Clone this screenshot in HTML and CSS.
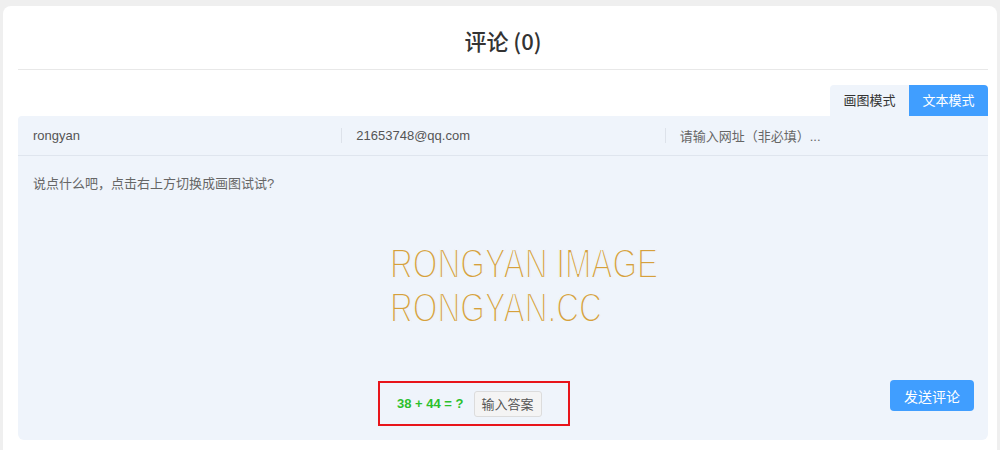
FILE: index.html
```html
<!DOCTYPE html>
<html lang="zh-CN">
  <head>
    <meta charset="UTF-8" />
    <meta name="viewport" content="width=device-width, initial-scale=1.0" />
    <title>评论</title>
    <link rel="stylesheet" href="styles.css">
  </head>
  <body>
    <div class="card">
      <header class="title">
        <h3>评论 (0)</h3>
      </header>

      <div class="tabs">
        <span class="tab">画图模式</span>
        <span class="tab active">文本模式</span>
      </div>

      <form class="comment-form">
        <div class="fields">
          <div class="field">rongyan</div>
          <div class="field">21653748@qq.com</div>
          <div class="field placeholder">请输入网址（非必填）...</div>
        </div>

        <div class="textarea">
          <p class="placeholder">说点什么吧，点击右上方切换成画图试试?</p>
          <div class="watermark">
            <span>RONGYAN IMAGE</span>
            <span>RONGYAN.CC</span>
          </div>
        </div>

        <div class="footer">
          <div class="captcha">
            <span class="question">38 + 44 = ?</span>
            <button type="button" class="answer">输入答案</button>
          </div>
          <button type="button" class="btn">发送评论</button>
        </div>
      </form>
    </div>
  </body>
</html>
```

FILE: styles.css
```css
* {
  margin: 0;
  padding: 0;
  outline: 0;
  box-sizing: border-box;
  font-family: 'Liberation Sans', 'Noto Sans CJK SC', sans-serif;
}
body {
  width: 100%;
  height: 100vh;
  padding: 6px 3px 0 3px;
  background: #efefef;
  overflow: hidden;
}
.card {
  height: 100%;
  padding: 0 9px 0 15px;
  background: #fff;
  border-radius: 8px 8px 0 0;
}
.title {
  height: 64px;
  border-bottom: 1px solid #e8e8e8;
  display: flex;
  align-items: center;
  justify-content: center;
  padding-top: 4px;
}
.title h3 {
  font-family: 'Noto Sans CJK SC', sans-serif;
  font-size: 22px;
  font-weight: 500;
  color: #333;
}
.tabs {
  margin-top: 15px;
  display: flex;
  justify-content: flex-end;
}
.tab {
  width: 79px;
  height: 31px;
  line-height: 31px;
  text-align: center;
  font-size: 13px;
  color: #333;
  background: #eff4fb;
  border-radius: 4px 0 0 0;
}
.tab.active {
  color: #fff;
  background: #409eff;
  border-radius: 0 4px 0 0;
}
.comment-form {
  background: #eff4fb;
  border-radius: 4px 0 6px 6px;
  height: 324px;
  display: flex;
  flex-direction: column;
}
.fields {
  height: 40px;
  display: flex;
  border-bottom: 1px solid #dfe5ee;
}
.field {
  flex: 1;
  font-size: 13px;
  color: #555;
  display: flex;
  align-items: center;
  padding-left: 15px;
  position: relative;
}
.field + .field::before {
  content: '';
  position: absolute;
  left: 0;
  top: 12px;
  height: 15px;
  border-left: 1px solid #dde2ea;
}
.placeholder {
  color: #666;
}
.textarea {
  flex: 1;
  padding: 17px 15px 0 15px;
}
.textarea .placeholder {
  font-size: 13px;
}
/* thin the strokes by painting a background-coloured outline over them */
.watermark {
  margin: 49px 0 0 357px;
  display: flex;
  flex-direction: column;
  color: #d6a03c;
  -webkit-text-stroke: 1.8px #eff4fb;
  font-family: 'Inter', sans-serif;
  font-size: 43px;
  line-height: 44px;
  transform: scaleX(0.735);
  transform-origin: left;
}
.footer {
  height: 70px;
  display: flex;
  align-items: flex-start;
  justify-content: space-between;
  padding: 10px 14px 0 360px;
}
.captcha {
  margin-top: 1px;
  width: 192px;
  height: 45px;
  border: 2px solid #e8141a;
  display: flex;
  align-items: center;
  padding-left: 17px;
  gap: 10px;
}
.question {
  font-size: 13px;
  font-weight: bold;
  color: #2cc02c;
}
.answer {
  height: 26px;
  width: 68px;
  font-size: 13px;
  color: #555;
  background: #f4f4f4;
  border: 1px solid #dcdcdc;
  border-radius: 3px;
  cursor: pointer;
}
.btn {
  width: 84px;
  height: 31px;
  border: none;
  border-radius: 4px;
  font-size: 14px;
  color: #fff;
  background: #409eff;
  cursor: pointer;
}
```
